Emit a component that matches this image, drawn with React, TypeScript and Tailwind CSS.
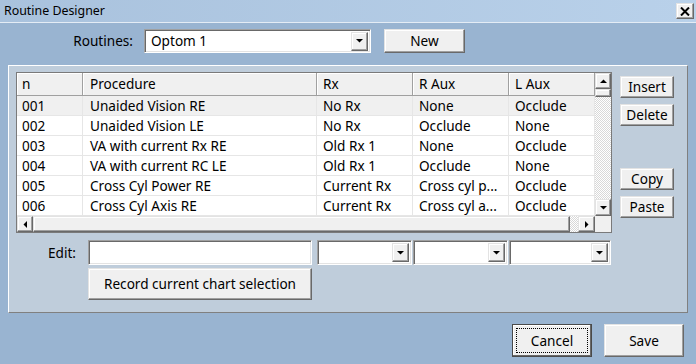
import React from "react";

const raised =
  "bg-[#f0f0f0] border border-t-[#e3e3e3] border-l-[#e3e3e3] border-r-[#696969] border-b-[#696969] shadow-[inset_-1px_-1px_#a0a0a0,inset_1px_1px_#ffffff]";
const sunken =
  "bg-white border border-t-[#a0a0a0] border-l-[#a0a0a0] border-r-white border-b-white shadow-[inset_1px_1px_#696969,inset_-1px_-1px_#e3e3e3]";
const dither =
  "bg-[image:repeating-conic-gradient(#ffffff_0_25%,#d8d8d8_0_50%)] bg-[length:2px_2px]";

function Arrow({ dir }: { dir: "up" | "down" | "left" | "right" }) {
  const pts = {
    up: "0,4 7,4 3.5,0.5",
    down: "0,0 7,0 3.5,3.5",
    left: "4,0 4,7 0.5,3.5",
    right: "0,0 0,7 3.5,3.5",
  }[dir];
  const vertical = dir === "up" || dir === "down";
  return (
    <svg width={vertical ? 7 : 4} height={vertical ? 4 : 7} viewBox={vertical ? "0 0 7 4" : "0 0 4 7"}>
      <polygon points={pts} fill="#000" />
    </svg>
  );
}

function Combo({ w, h = 25 }: { w: number; h?: number }) {
  return (
    <div className={`${sunken} flex justify-end items-center pr-[2px]`} style={{ width: w, height: h }}>
      <div className={`${raised} w-[17px] h-[19px] flex items-center justify-center`}>
        <Arrow dir="down" />
      </div>
    </div>
  );
}

const cols = [
  { name: "n", w: 66, pad: "pl-[5px]" },
  { name: "Procedure", w: 234, pad: "pl-[7px]" },
  { name: "Rx", w: 96, pad: "pl-[6px]" },
  { name: "R Aux", w: 96, pad: "pl-[6px]" },
  { name: "L Aux", w: 86, pad: "pl-[6px]" },
];

const rows = [
  ["001", "Unaided Vision RE", "No Rx", "None", "Occlude"],
  ["002", "Unaided Vision LE", "No Rx", "Occlude", "None"],
  ["003", "VA with current Rx RE", "Old Rx 1", "None", "Occlude"],
  ["004", "VA with current RC LE", "Old Rx 1", "Occlude", "None"],
  ["005", "Cross Cyl Power RE", "Current Rx", "Cross cyl p...", "Occlude"],
  ["006", "Cross Cyl Axis RE", "Current Rx", "Cross cyl a...", "Occlude"],
];

export default function App() {
  return (
    <div className="w-[696px] h-[364px] bg-[#99b4d1] flex flex-col overflow-hidden text-[13.6px] text-black font-['Noto_Sans',sans-serif] leading-none">
      {/* Title bar */}
      <div className="h-[23px] shrink-0 border-b border-[#e4ecf5] bg-gradient-to-r from-[#a9c2dd] to-[#b9d1ea] flex items-center justify-between pl-[4px] pr-[2px]">
        <span className="text-[12.4px] text-black">Routine Designer</span>
        <div className={`${raised} w-[18px] h-[16px] flex items-center justify-center`}>
          <svg width="10" height="9" viewBox="0 0 10 9">
            <path d="M1 0.5 L9 8.5 M9 0.5 L1 8.5" stroke="#000" strokeWidth="2" />
          </svg>
        </div>
      </div>

      {/* Routines row */}
      <div className="flex items-center mt-[6px] h-[24px]">
        <span className="w-[133px] text-right">Routines:</span>
        <div className={`${sunken} ml-[11px] w-[227px] h-[24px] flex items-center justify-between pl-[6px] pr-[2px]`}>
          <span>Optom 1</span>
          <div className={`${raised} w-[17px] h-[19px] flex items-center justify-center`}>
            <Arrow dir="down" />
          </div>
        </div>
        <button className={`${raised} ml-[13px] w-[81px] h-[24px]`}>New</button>
      </div>

      {/* Main panel */}
      <div className="ml-[8px] mt-[12px] w-[680px] h-[248px] bg-[#bfcddb] border border-t-white border-l-white border-r-[#808080] border-b-[#808080] pl-[7px] pt-[6px] flex flex-col">
        <div className="flex">
          {/* Grid */}
          <div className="w-[596px] h-[161px] border border-[#7a7a7a] bg-white flex flex-col">
            <div className="flex flex-1 min-h-0">
              <div className="w-[578px] flex flex-col">
                <div className="flex h-[23px] border-b border-[#a0a0a0]">
                  {cols.map((c) => (
                    <div
                      key={c.name}
                      className={`h-full bg-[#f0f0f0] border-r border-[#a0a0a0] shadow-[inset_1px_1px_#ffffff] flex items-center ${c.pad}`}
                      style={{ width: c.w }}
                    >
                      {c.name}
                    </div>
                  ))}
                </div>
                {rows.map((r, i) => (
                  <div key={r[0]} className={`flex h-[20px] ${i === 0 ? "bg-[#f0f0f0]" : "bg-white"}`}>
                    {r.map((v, j) => (
                      <div
                        key={j}
                        className={`h-full border-r border-b border-[#e6e6e6] flex items-center whitespace-nowrap overflow-hidden ${cols[j].pad}`}
                        style={{ width: cols[j].w }}
                      >
                        {v}
                      </div>
                    ))}
                  </div>
                ))}
              </div>
              {/* Vertical scrollbar */}
              <div className="w-[16px] flex flex-col">
                <div className={`${raised} h-[16px] flex items-center justify-center`}>
                  <Arrow dir="up" />
                </div>
                <div className={`${raised} h-[8px]`} />
                <div className={`flex-1 ${dither}`} />
                <div className={`${raised} h-[17px] flex items-center justify-center`}>
                  <Arrow dir="down" />
                </div>
              </div>
            </div>
            {/* Horizontal scrollbar */}
            <div className="h-[16px] flex shrink-0">
              <div className={`${raised} w-[16px] flex items-center justify-center`}>
                <Arrow dir="left" />
              </div>
              <div className={`${raised} w-[537px]`} />
              <div className={`flex-1 ${dither}`} />
              <div className={`${raised} w-[17px] flex items-center justify-center`}>
                <Arrow dir="right" />
              </div>
              <div className="w-[16px] bg-[#f0f0f0]" />
            </div>
          </div>

          {/* Side buttons */}
          <div className="ml-[8px] mt-[4px] flex flex-col w-[54px]">
            <button className={`${raised} h-[22px]`}>Insert</button>
            <button className={`${raised} h-[22px] mt-[6px]`}>Delete</button>
            <button className={`${raised} h-[22px] mt-[42px]`}>Copy</button>
            <button className={`${raised} h-[22px] mt-[6px]`}>Paste</button>
          </div>
        </div>

        {/* Edit row */}
        <div className="flex items-center mt-[7px]">
          <span className="w-[60px] text-right">Edit:</span>
          <div className={`${sunken} ml-[12px] w-[224px] h-[25px]`} />
          <div className="ml-[5px]">
            <Combo w={95} />
          </div>
          <div className="ml-[1px]">
            <Combo w={95} />
          </div>
          <div className="ml-[1px]">
            <Combo w={102} />
          </div>
        </div>
        <button className={`${raised} ml-[72px] mt-[3px] w-[224px] h-[32px]`}>Record current chart selection</button>
      </div>

      {/* Bottom buttons */}
      <div className="flex justify-end pr-[12px] mt-[11px] gap-[12px]">
        <button className="w-[80px] h-[33px] bg-[#f0f0f0] border border-[#4a4a4a] shadow-[inset_-1px_-1px_#696969,inset_1px_1px_#ffffff] p-[3px]">
          <div className="w-full h-full border border-dotted border-black flex items-center justify-center">Cancel</div>
        </button>
        <button className={`${raised} w-[80px] h-[33px]`}>Save</button>
      </div>
    </div>
  );
}
